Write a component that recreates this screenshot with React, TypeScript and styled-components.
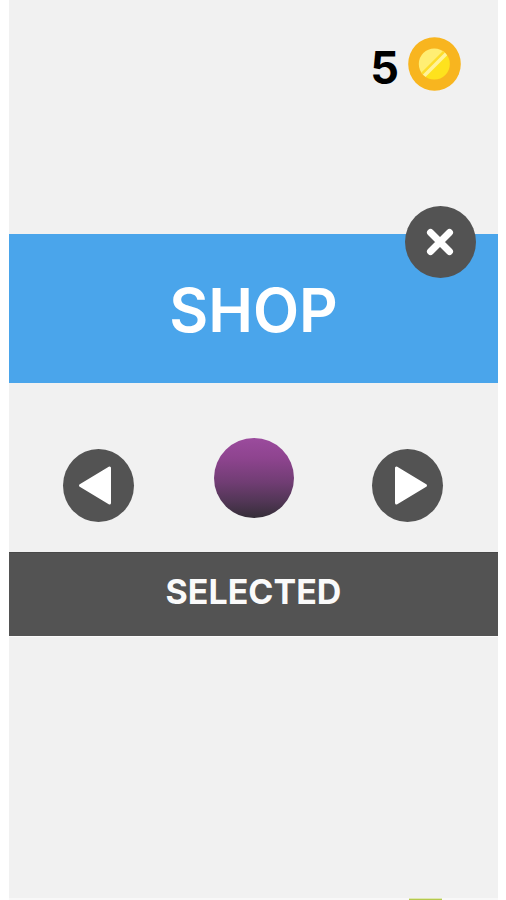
import React from "react";
import styled, { createGlobalStyle } from "styled-components";

const GlobalStyle = createGlobalStyle`
  * { box-sizing: border-box; }
  body { margin: 0; background: #fff; font-family: Inter, "Liberation Sans", sans-serif; }
`;

const Screen = styled.main`
  display: flex;
  flex-direction: column;
  width: 489px;
  height: 900px;
  margin-left: 9px;
  background: #f1f1f1;
  overflow: hidden;
`;

const Header = styled.header`
  display: flex;
  flex: 0 0 234px;
  justify-content: flex-end;
  align-items: flex-start;
  gap: 9px;
  padding: 37px 37px 0 0;
`;

const CoinCount = styled.span`
  font-size: 45px;
  font-weight: 700;
  line-height: 54px;
  padding-top: 4px;
  color: #000;
`;

const Banner = styled.section`
  position: relative;
  display: flex;
  flex: 0 0 149px;
  justify-content: center;
  background: #4aa5eb;
`;

const Title = styled.h1`
  margin: 0;
  padding-top: 4px;
  font-size: 60px;
  font-weight: 600;
  line-height: 144px;
  color: #fff;
`;

const RoundButton = styled.button`
  display: block;
  width: 71px;
  height: 73px;
  padding: 0;
  border: 0;
  border-radius: 50%;
  background: #535353;
  svg { display: block; }
`;

const CloseButton = styled(RoundButton)`
  position: absolute;
  top: -28px;
  right: 22.5px;
  height: 72px;
`;

const Picker = styled.section`
  display: flex;
  flex: 0 0 169px;
  justify-content: space-between;
  align-items: flex-start;
  padding: 55px 55px 0 54px;
`;

const Arrow = styled(RoundButton)`
  margin-top: 11px;
`;

const Ball = styled.div`
  width: 80px;
  height: 80px;
  margin-left: 2px;
  border-radius: 50%;
  background: linear-gradient(#9b4b9d 0%, #8e448f 25%, #713d74 55%, #513655 80%, #352e38 100%);
`;

const StatusBar = styled.section`
  display: flex;
  flex: 0 0 84px;
  justify-content: center;
  border-top: 1px solid #484848;
  background: #535353;
`;

const Status = styled.span`
  font-size: 34px;
  font-weight: 700;
  line-height: 77px;
  color: #fafafa;
`;

const Footer = styled.footer`
  display: flex;
  flex: 1;
  align-items: flex-end;
  border-top: 1px solid #fafafa;
`;

const BottomEdge = styled.div`
  display: flex;
  align-items: flex-end;
  flex: 1;
  height: 2px;
  padding-left: 400px;
  background: #f8f8f8;
`;

const GreenTile = styled.div`
  width: 33px;
  height: 2px;
  border-top: 1px solid #dfe8b2;
  background: #b5c94d;
`;

const Coin = () => (
  <svg width="53" height="54" viewBox="0 0 53 54" aria-hidden="true">
    <defs>
      <linearGradient id="coinFace" x1="0" y1="0" x2="1" y2="1">
        <stop offset="0.48" stopColor="#ffee73" />
        <stop offset="0.54" stopColor="#fee21d" />
      </linearGradient>
      <clipPath id="coinClip"><circle cx="26.3" cy="27" r="15.5" /></clipPath>
    </defs>
    <ellipse cx="26.5" cy="27" rx="26.3" ry="26.8" fill="#f8b51f" />
    <circle cx="26.3" cy="27" r="15.5" fill="url(#coinFace)" />
    <g clipPath="url(#coinClip)">
      <path d="M12 39L37 14" stroke="#fddd2b" strokeWidth="3" />
      <path d="M14 41L40 15" stroke="#fff29a" strokeWidth="3.5" />
    </g>
  </svg>
);

const Triangle = ({ left = false }: { left?: boolean }) => (
  <svg width="71" height="73" viewBox="0 0 71 73" aria-hidden="true">
    <path
      d={left ? "M17.5 36.5L46.5 19V54Z" : "M53.5 36.5L24.5 19V54Z"}
      fill="#fff"
      stroke="#fff"
      strokeWidth="3"
      strokeLinejoin="round"
    />
  </svg>
);

export default function App() {
  return (
    <>
      <GlobalStyle />
      <Screen>
        <Header>
          <CoinCount>5</CoinCount>
          <Coin />
        </Header>
        <Banner>
          <Title>SHOP</Title>
          <CloseButton aria-label="Close">
            <svg width="71" height="72" viewBox="0 0 71 72" aria-hidden="true">
              <path d="M25.5 26.5L44.5 45.5M44.5 26.5L25.5 45.5" stroke="#fff" strokeWidth="7" strokeLinecap="round" />
            </svg>
          </CloseButton>
        </Banner>
        <Picker>
          <Arrow aria-label="Previous"><Triangle left /></Arrow>
          <Ball />
          <Arrow aria-label="Next"><Triangle /></Arrow>
        </Picker>
        <StatusBar><Status>SELECTED</Status></StatusBar>
        <Footer><BottomEdge><GreenTile /></BottomEdge></Footer>
      </Screen>
    </>
  );
}
